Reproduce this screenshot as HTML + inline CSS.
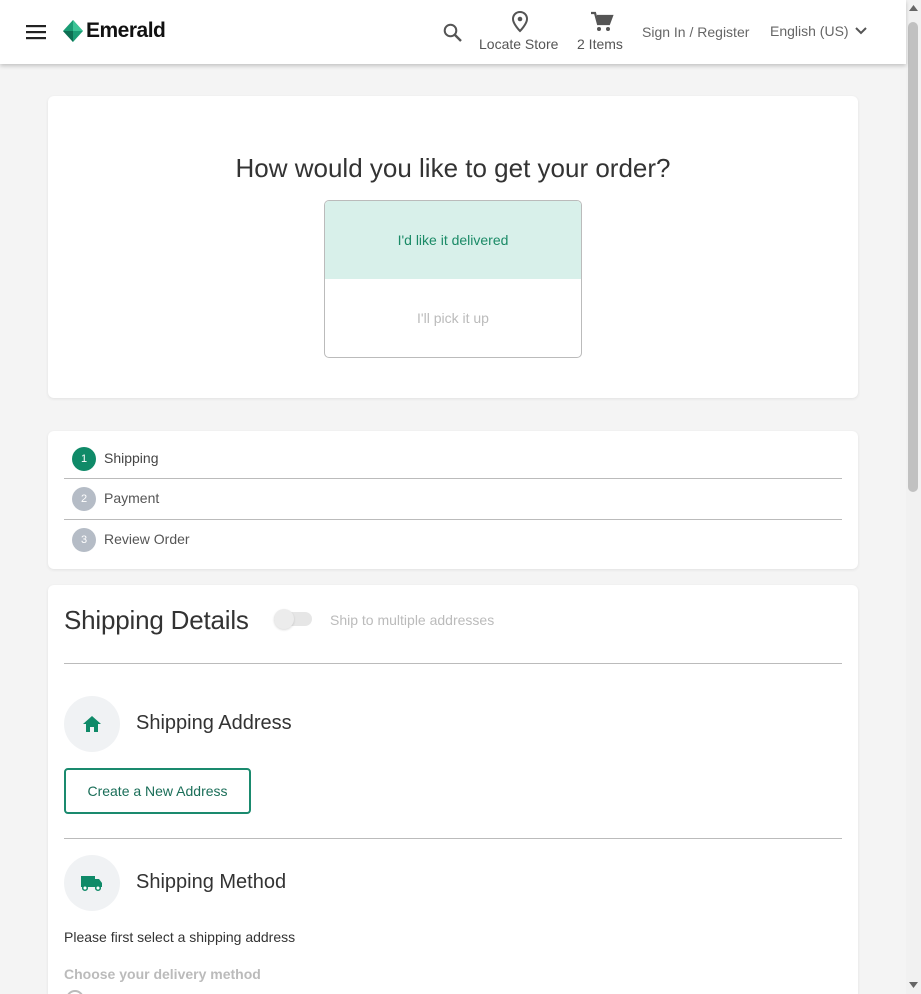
<!DOCTYPE html>
<html style="width:921px;height:994px;overflow:hidden"><head><style>
*{box-sizing:border-box;margin:0;padding:0}
body{width:921px;height:994px;overflow:hidden;background:#f4f4f4;font-family:"Liberation Sans",Roboto,sans-serif;color:#333;position:relative}
.hdr{position:absolute;left:0;top:0;width:906px;height:64px;background:#fff;box-shadow:0 2px 4px rgba(0,0,0,.2);z-index:2}
.card{position:absolute;left:48px;width:810px;background:#fff;border-radius:6px;box-shadow:0 1px 3px rgba(0,0,0,.08)}
.t{position:absolute;white-space:nowrap}
.sb{position:absolute;left:906px;top:0;width:15px;height:994px;background:#f1f1f1}
</style></head><body>
<div class="hdr">
 <svg class="t" style="left:26px;top:24px" width="20" height="16"><rect y="1" width="20" height="2.2" fill="#222"/><rect y="7" width="20" height="2.2" fill="#222"/><rect y="13" width="20" height="2.2" fill="#222"/></svg>
 <svg class="t" style="left:63px;top:20px" width="20" height="22"><polygon points="10,0 20,11 10,22 0,11" fill="#1a9c74"/><polygon points="10,0 20,11 10,11" fill="#3cc496"/><polygon points="0,11 10,22 10,11" fill="#0d6e52"/></svg>
 <div class="t" style="left:86px;top:19px;font-size:21px;font-weight:bold;color:#111;letter-spacing:-0.5px">Emerald</div>
 <svg class="t" style="left:443px;top:23px" width="20" height="20"><circle cx="7.5" cy="7.5" r="5.8" stroke="#555" stroke-width="2" fill="none"/><line x1="12" y1="12" x2="18" y2="18" stroke="#555" stroke-width="2.4"/></svg>
 <svg class="t" style="left:511px;top:11px" width="18" height="22"><path d="M9 1C5 1 2 4 2 8c0 5 7 12 7 12s7-7 7-12c0-4-3-7-7-7z" fill="none" stroke="#555" stroke-width="2"/><circle cx="9" cy="8" r="2.3" fill="#555"/></svg>
 <div class="t" style="left:479px;top:36px;font-size:14px;color:#555">Locate Store</div>
 <svg class="t" style="left:590px;top:11px" width="24" height="22"><path d="M1 2h4l3 11h11l3-8H7" fill="none" stroke="#555" stroke-width="2.2"/><path d="M7 5h15l-3 8H8z" fill="#555"/><circle cx="9" cy="18" r="2" fill="#555"/><circle cx="18" cy="18" r="2" fill="#555"/></svg>
 <div class="t" style="left:577px;top:36px;font-size:14px;color:#555">2 Items</div>
 <div class="t" style="left:642px;top:24px;font-size:14px;color:#666">Sign In / Register</div>
 <div class="t" style="left:770px;top:23px;font-size:14px;color:#666">English (US)</div>
 <svg class="t" style="left:855px;top:27px" width="12" height="9"><path d="M1 1l5 5 5-5" fill="none" stroke="#555" stroke-width="2"/></svg>
</div>
<div class="card" style="top:96px;height:302px">
 <div class="t" style="left:0;width:810px;text-align:center;top:57px;font-size:26px;color:#333">How would you like to get your order?</div>
 <div style="position:absolute;left:276px;top:104px;width:258px;height:158px;border:1px solid #bbb;border-radius:5px;overflow:hidden">
  <div style="height:78px;background:#d8f0ea;color:#1a8a66;font-size:14px;text-align:center;line-height:78px">I'd like it delivered</div>
  <div style="height:78px;color:#bbb;font-size:14px;text-align:center;line-height:78px">I'll pick it up</div>
 </div>
</div>
<div class="card" style="top:431px;height:138px">
 <div style="position:absolute;left:16px;right:16px;top:0">
  <div style="height:48px;border-bottom:1px solid #bbb;position:relative"><div class="t" style="left:8px;top:16px;width:24px;height:24px;border-radius:50%;background:#0f8a68;color:#fff;font-size:11px;text-align:center;line-height:24px">1</div><div class="t" style="left:40px;top:19px;font-size:14px;color:#444">Shipping</div></div>
  <div style="height:41px;border-bottom:1px solid #bbb;position:relative"><div class="t" style="left:8px;top:8px;width:24px;height:24px;border-radius:50%;background:#b5bcc6;color:#fff;font-size:11px;text-align:center;line-height:24px">2</div><div class="t" style="left:40px;top:11px;font-size:14px;color:#555">Payment</div></div>
  <div style="height:41px;position:relative"><div class="t" style="left:8px;top:8px;width:24px;height:24px;border-radius:50%;background:#b5bcc6;color:#fff;font-size:11px;text-align:center;line-height:24px">3</div><div class="t" style="left:40px;top:11px;font-size:14px;color:#555">Review Order</div></div>
 </div>
</div>
<div class="card" style="top:585px;height:409px;border-radius:6px 6px 0 0">
 <div class="t" style="left:16px;top:20px;font-size:26px;color:#333;letter-spacing:-0.2px">Shipping Details</div>
 <div class="t" style="left:226px;top:27px;width:38px;height:14px;border-radius:7px;background:#e6e6e6"></div>
 <div class="t" style="left:226px;top:24px;width:20px;height:20px;border-radius:50%;background:#ececec;box-shadow:0 1px 2px rgba(0,0,0,.15)"></div>
 <div class="t" style="left:282px;top:27px;font-size:14px;color:#bbb">Ship to multiple addresses</div>
 <div style="position:absolute;left:16px;right:16px;top:78px;border-top:1px solid #bbb"></div>
 <div class="t" style="left:16px;top:111px;width:56px;height:56px;border-radius:50%;background:#f0f2f4"></div>
 <svg class="t" style="left:34px;top:130px" width="20" height="18"><path d="M10 1L1 9h3v8h4v-5h4v5h4V9h3z" fill="#0f8a68"/></svg>
 <div class="t" style="left:88px;top:127px;font-size:20px;color:#333">Shipping Address</div>
 <div class="t" style="left:16px;top:183px;width:187px;height:46px;border:2px solid #1a8a6e;border-radius:4px;font-size:14px;color:#1a6e58;text-align:center;line-height:42px">Create a New Address</div>
 <div style="position:absolute;left:16px;right:16px;top:253px;border-top:1px solid #bbb"></div>
 <div class="t" style="left:16px;top:270px;width:56px;height:56px;border-radius:50%;background:#f0f2f4"></div>
 <svg class="t" style="left:32px;top:289px" width="24" height="18"><path d="M1 2h14v11H1z" fill="#0f8a68"/><path d="M15 5h4l3 4v4h-7z" fill="#0f8a68"/><circle cx="5" cy="14" r="2.3" fill="#fff" stroke="#0f8a68" stroke-width="1.5"/><circle cx="18" cy="14" r="2.3" fill="#fff" stroke="#0f8a68" stroke-width="1.5"/></svg>
 <div class="t" style="left:88px;top:286px;font-size:20px;color:#333">Shipping Method</div>
 <div class="t" style="left:16px;top:344px;font-size:14px;color:#333">Please first select a shipping address</div>
 <div class="t" style="left:16px;top:381px;font-size:14px;font-weight:bold;color:#bbb">Choose your delivery method</div>
 <div class="t" style="left:18px;top:405px;width:18px;height:18px;border-radius:50%;border:2px solid #bbb"></div>
</div>
<div class="sb">
 <svg class="t" style="left:3px;top:5px" width="9" height="6"><path d="M0 6L4.5 0 9 6z" fill="#666"/></svg>
 <div class="t" style="left:2px;top:22px;width:10px;height:470px;border-radius:5px;background:#c1c1c1"></div>
 <svg class="t" style="left:3px;top:982px" width="9" height="6"><path d="M0 0L4.5 6 9 0z" fill="#666"/></svg>
</div>
</body></html>
